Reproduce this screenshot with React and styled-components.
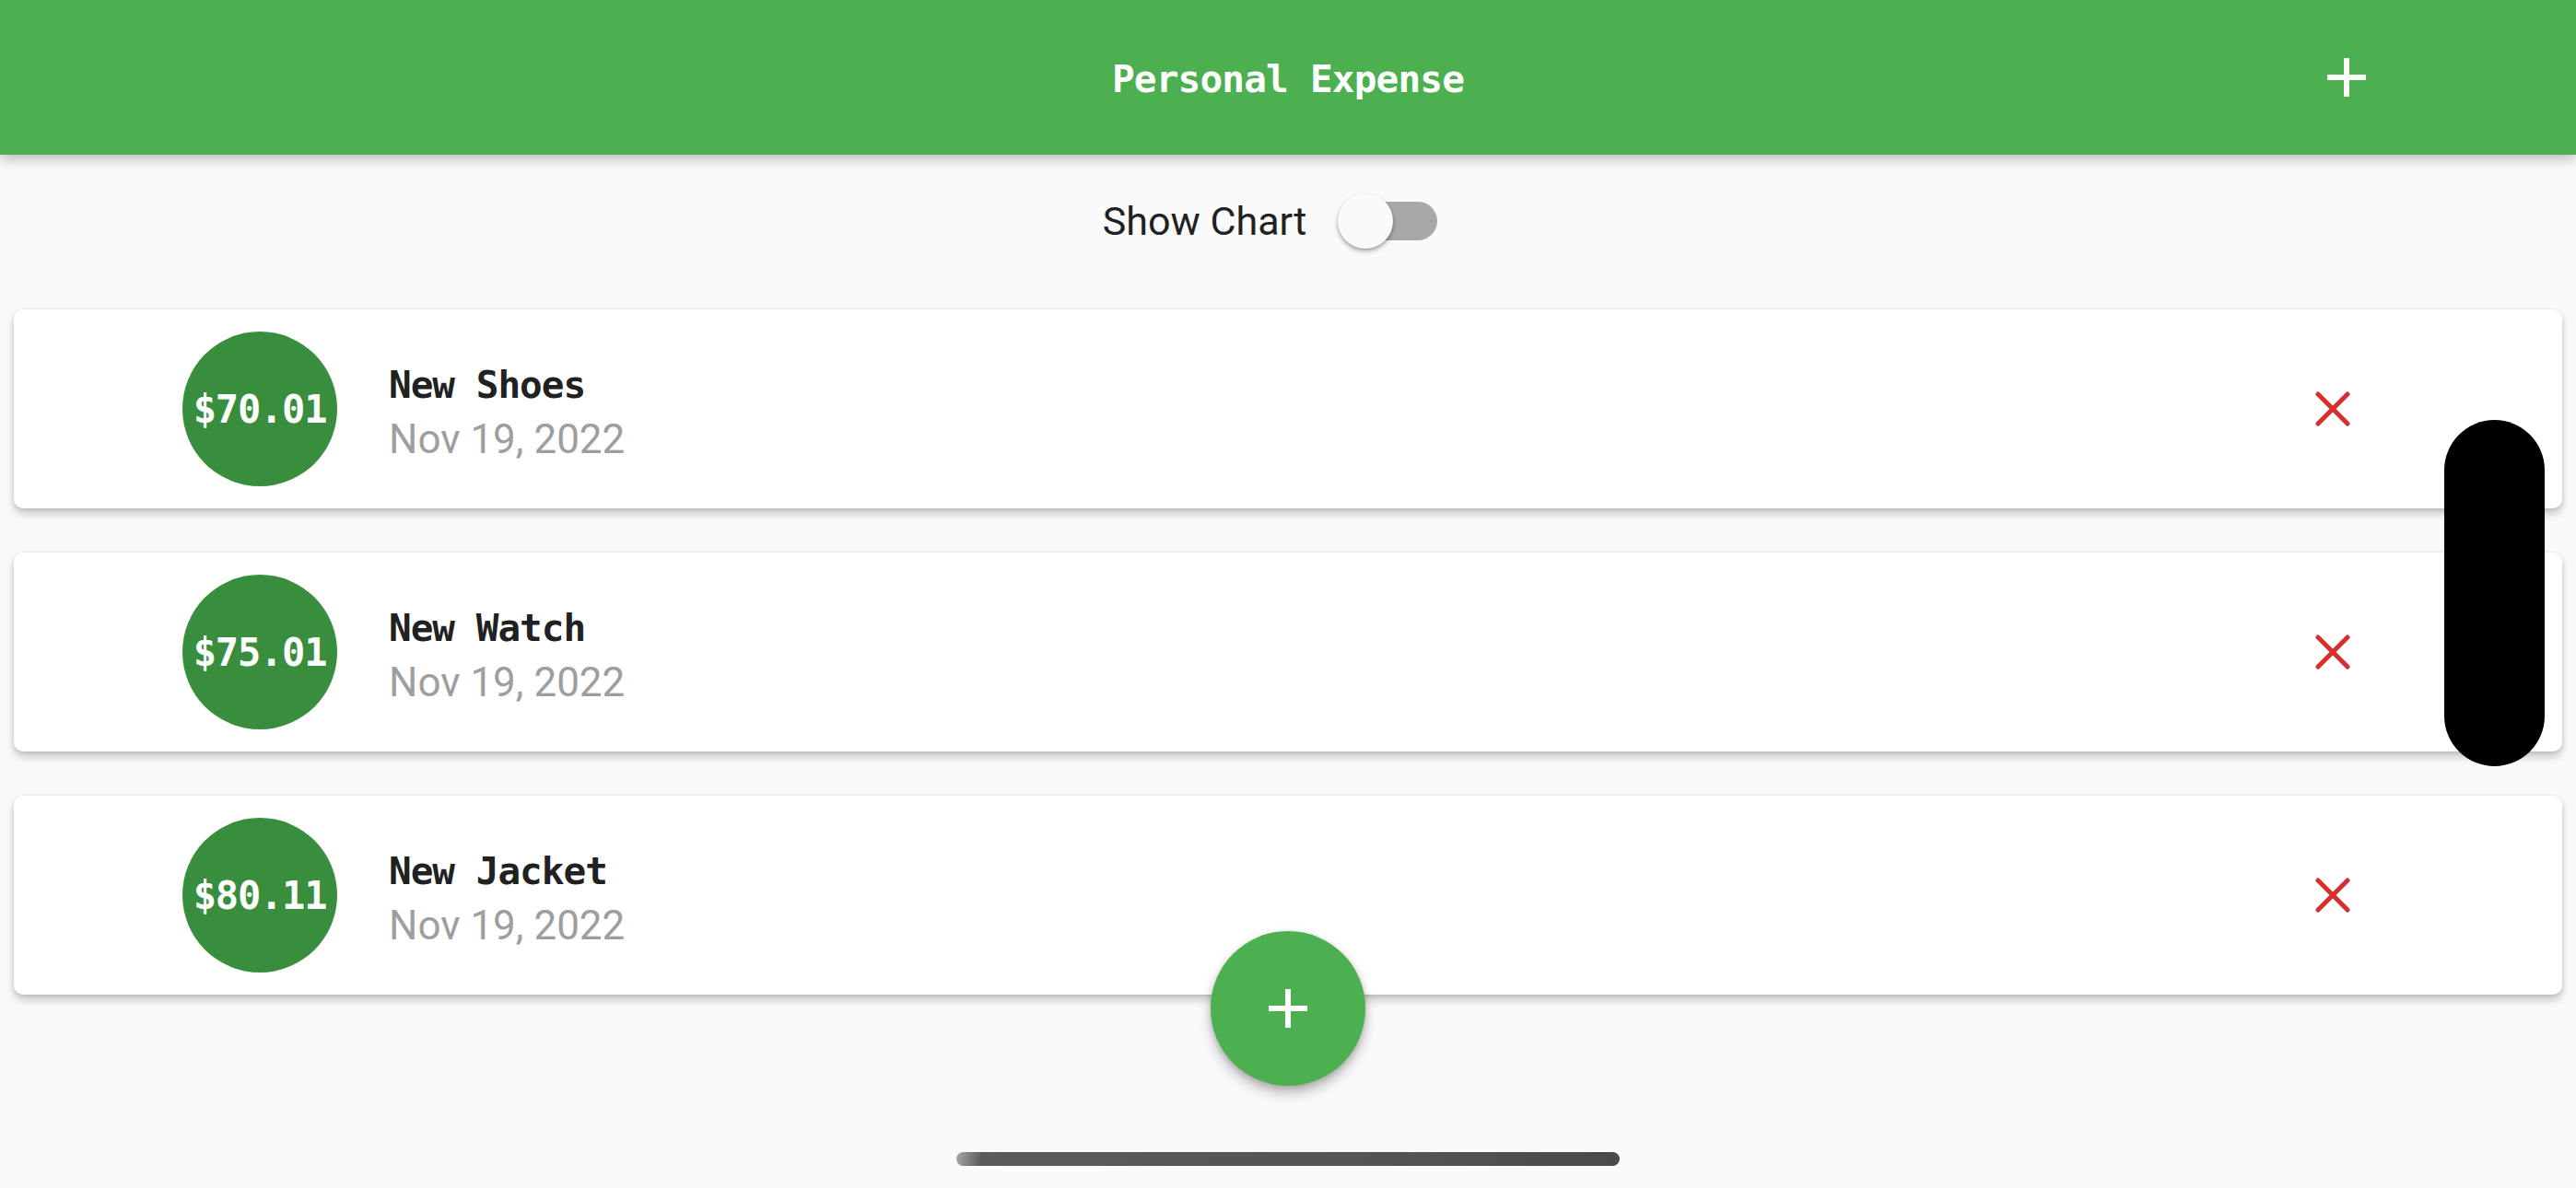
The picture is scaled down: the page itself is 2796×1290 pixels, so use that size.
import React from "react";
import styled, { createGlobalStyle } from "styled-components";

const GlobalStyle = createGlobalStyle`
  html, body {
    margin: 0;
    padding: 0;
    background: #fafafa;
  }
  body {
    width: 2796px;
    height: 1290px;
    overflow: hidden;
    font-family: Roboto, "Noto Sans", sans-serif;
  }
  * { box-sizing: border-box; }
`;

const Screen = styled.div`
  position: relative;
  width: 2796px;
  height: 1290px;
  background: #fafafa;
  display: flex;
  flex-direction: column;
  overflow: hidden;
`;

const AppBar = styled.header`
  position: relative;
  z-index: 2;
  height: 168px;
  flex: 0 0 168px;
  background: #4caf50;
  box-shadow: 0 4px 14px rgba(0, 0, 0, 0.28);
  display: grid;
  grid-template-columns: 1fr auto 1fr;
  align-items: center;
  padding: 0 177px;
`;

const Title = styled.h1`
  grid-column: 2;
  margin: 0;
  padding-top: 4px;
  font-family: "DejaVu Sans Mono", "Liberation Mono", monospace;
  font-weight: 700;
  font-size: 41px;
  letter-spacing: -0.8px;
  color: #ffffff;
`;

const IconButton = styled.button`
  grid-column: 3;
  justify-self: end;
  width: 144px;
  height: 144px;
  border: none;
  background: transparent;
  padding: 0;
  display: flex;
  align-items: center;
  justify-content: center;
  cursor: pointer;
`;

const ToggleRow = styled.div`
  height: 144px;
  flex: 0 0 144px;
  display: flex;
  align-items: center;
  justify-content: center;
  gap: 4px;
`;

const ToggleLabel = styled.span`
  font-family: Roboto, "Noto Sans", sans-serif;
  font-size: 43px;
  line-height: 48px;
  color: #212121;
`;

const SwitchBox = styled.div`
  width: 177px;
  height: 144px;
  display: flex;
  align-items: center;
  justify-content: center;
`;

const Track = styled.div`
  position: relative;
  width: 99px;
  height: 42px;
  border-radius: 21px;
  background: ${(p) => (p.$on ? "#a5d6a7" : "#a8a8a8")};
`;

const Thumb = styled.div`
  position: absolute;
  top: -9px;
  left: ${(p) => (p.$on ? "48px" : "-9px")};
  width: 60px;
  height: 60px;
  border-radius: 50%;
  background: #fafafa;
  box-shadow: 0 3px 5px rgba(0, 0, 0, 0.3), 0 1px 2px rgba(0, 0, 0, 0.15);
`;

const List = styled.div`
  height: 785px;
  flex: 0 0 785px;
  overflow: hidden;
  display: flex;
  flex-direction: column;
`;

const Card = styled.div`
  margin: 24px 15px;
  height: 216px;
  flex: 0 0 216px;
  background: #ffffff;
  border-radius: 10px;
  box-shadow: 0 6px 10px rgba(0, 0, 0, 0.2), 0 1px 5px rgba(0, 0, 0, 0.1);
  display: flex;
  align-items: center;
  padding-left: 183px;
  padding-right: 213px;
`;

const Avatar = styled.div`
  width: 168px;
  height: 168px;
  flex: 0 0 168px;
  border-radius: 50%;
  background: #388e3c;
  display: flex;
  align-items: center;
  justify-content: center;
  font-family: "DejaVu Sans Mono", "Liberation Mono", monospace;
  font-weight: 700;
  font-size: 42px;
  letter-spacing: -1.2px;
  color: #ffffff;
`;

const TextCol = styled.div`
  flex: 1;
  margin-left: 56px;
  padding-top: 8px;
  display: flex;
  flex-direction: column;
`;

const ItemTitle = styled.div`
  font-family: "DejaVu Sans Mono", "Liberation Mono", monospace;
  font-weight: 700;
  font-size: 41px;
  letter-spacing: -1px;
  line-height: 52px;
  color: #212121;
`;

const ItemDate = styled.div`
  margin-top: 5px;
  font-family: Roboto, "Noto Sans", sans-serif;
  font-size: 44px;
  line-height: 56px;
  color: #9e9e9e;
`;

const DeleteButton = styled.button`
  width: 72px;
  height: 72px;
  border: none;
  background: transparent;
  padding: 0;
  display: flex;
  align-items: center;
  justify-content: center;
  cursor: pointer;
`;

const Fab = styled.button`
  position: absolute;
  left: 1314px;
  bottom: 111px;
  width: 168px;
  height: 168px;
  border-radius: 50%;
  border: none;
  padding: 0;
  background: #4caf50;
  box-shadow: 0 8px 14px rgba(0, 0, 0, 0.25), 0 2px 6px rgba(0, 0, 0, 0.15);
  display: flex;
  align-items: center;
  justify-content: center;
  z-index: 3;
`;

const HomeIndicator = styled.div`
  position: absolute;
  left: 1038px;
  bottom: 24px;
  width: 720px;
  height: 15px;
  border-radius: 8px;
  background: linear-gradient(100deg, #a8a8a8 0%, #5a5a5a 4%, #555555 60%, #4a4a4a 100%);
`;

const SidePill = styled.div`
  position: absolute;
  right: 34px;
  top: 456px;
  width: 109px;
  height: 376px;
  border-radius: 55px;
  background: #000000;
  z-index: 4;
`;

const PlusIcon = ({ size = 42, stroke = 6 }) => (
  <svg width={size} height={size} viewBox="0 0 42 42">
    <path d="M0 21H42M21 0V42" stroke="#ffffff" strokeWidth={stroke} fill="none" />
  </svg>
);

const CloseIcon = () => (
  <svg width="40" height="40" viewBox="0 0 40 40">
    <path
      d="M4 4L36 36M36 4L4 36"
      stroke="#d32f2f"
      strokeWidth="5"
      strokeLinecap="round"
      fill="none"
    />
  </svg>
);

const items = [
  { id: 1, title: "New Shoes", amount: 70.01, date: "Nov 19, 2022" },
  { id: 2, title: "New Watch", amount: 75.01, date: "Nov 19, 2022" },
  { id: 3, title: "New Jacket", amount: 80.11, date: "Nov 19, 2022" },
];

export default function App() {
  return (
    <>
      <GlobalStyle />
      <Screen>
        <AppBar>
          <Title>Personal Expense</Title>
          <IconButton aria-label="Add">
            <PlusIcon />
          </IconButton>
        </AppBar>
        <ToggleRow>
          <ToggleLabel>Show Chart</ToggleLabel>
          <SwitchBox>
            <Track $on={false}>
              <Thumb $on={false} />
            </Track>
          </SwitchBox>
        </ToggleRow>
        <List>
          {items.map((it) => (
            <Card key={it.id}>
              <Avatar>${it.amount.toFixed(2)}</Avatar>
              <TextCol>
                <ItemTitle>{it.title}</ItemTitle>
                <ItemDate>{it.date}</ItemDate>
              </TextCol>
              <DeleteButton aria-label="Delete">
                <CloseIcon />
              </DeleteButton>
            </Card>
          ))}
        </List>
        <Fab aria-label="Add expense">
          <PlusIcon />
        </Fab>
        <HomeIndicator />
        <SidePill />
      </Screen>
    </>
  );
}
